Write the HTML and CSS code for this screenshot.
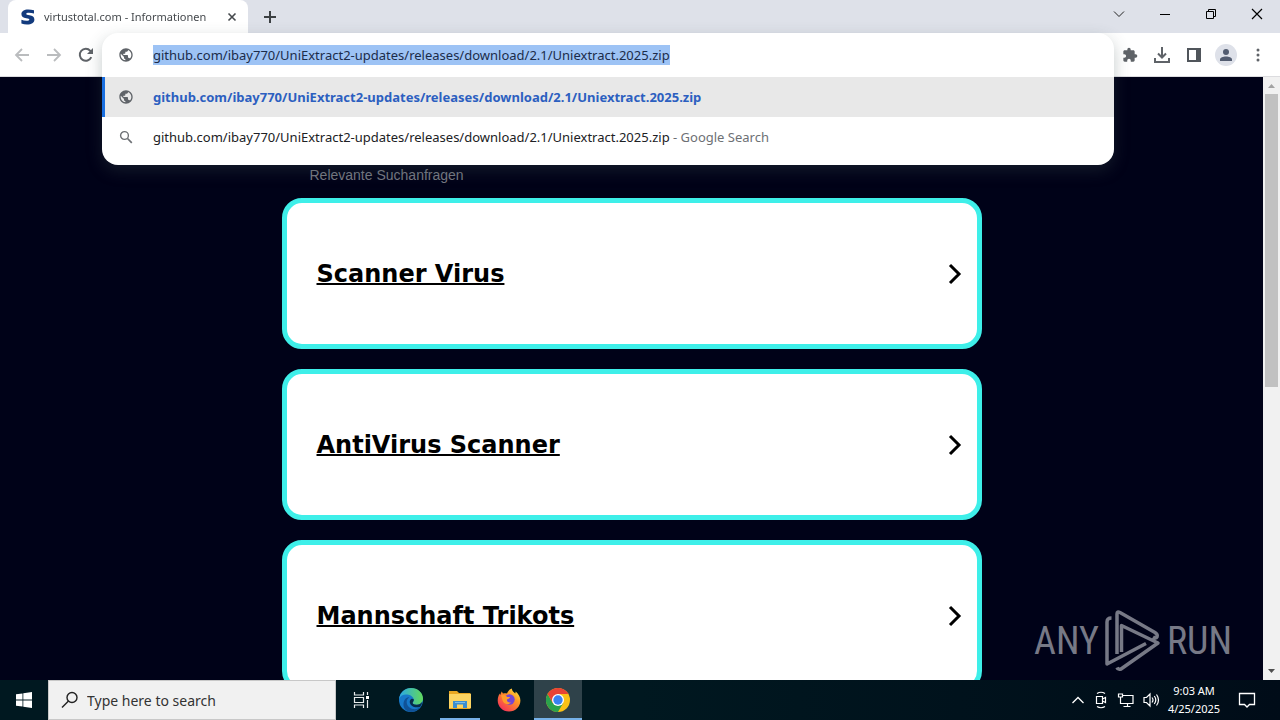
FILE: index.html
```html
<!DOCTYPE html>
<html lang="en">
<head>
    <meta charset="UTF-8">
    <meta name="viewport" content="width=device-width, initial-scale=1.0">
    <title>virtustotal.com - Informationen</title>
    <link rel="stylesheet" href="styles.css">
</head>
<body>
    <header class="tabstrip">
        <div class="tab">
            <svg class="favicon" width="16" height="16" viewBox="0 0 16 16"><path d="M14 4.600V1.200C12 .6 10 .4 8.200.4 4 .4 1.400 2.200 1.400 5c0 2.600 1.800 3.700 4.800 4.200 2.300.4 3.200.6 3.200 1.400 0 .9-1.100 1.200-2.900 1.200-1.800 0-3.500-.4-5.100-1.100v3.800c1.700.7 3.500 1 5.600 1 4.500 0 7.400-1.600 7.400-5 0-2.700-1.900-3.800-4.900-4.300C7.300 5.800 6.300 5.600 6.300 4.900c0-.8 1-1.100 2.600-1.100 1.700 0 3.500.3 5.100.8z" fill="#123a7d"/></svg>
            <span class="tab_title">virtustotal.com - Informationen</span>
            <button class="icon_button tab_close" aria-label="Close tab">
                <svg width="10" height="10" viewBox="0 0 10 10"><path d="M1.500 1.500l7 7M8.500 1.500l-7 7" stroke="#45494d" stroke-width="1.600"/></svg>
            </button>
        </div>
        <button class="icon_button new_tab" aria-label="New tab">
            <svg width="14" height="14" viewBox="0 0 14 14"><path d="M7 1v12M1 7h12" stroke="#3c4043" stroke-width="2"/></svg>
        </button>
        <div class="window_controls">
            <button class="icon_button" aria-label="Search tabs"><svg width="12" height="12" viewBox="0 0 12 12"><path d="M1 3.500l5 5 5-5" fill="none" stroke="#222"/></svg></button>
            <button class="icon_button" aria-label="Minimize"><svg width="12" height="12" viewBox="0 0 12 12"><path d="M1 6.500h10" stroke="#000"/></svg></button>
            <button class="icon_button" aria-label="Restore"><svg width="12" height="12" viewBox="0 0 12 12"><path d="M1.500 3.500h7v7h-7zM3.500 3.500v-2h7v7h-2" fill="none" stroke="#000"/></svg></button>
            <button class="icon_button" aria-label="Close"><svg width="12" height="12" viewBox="0 0 12 12"><path d="M1 1l10 10M11 1L1 11" stroke="#000" stroke-width="1.200"/></svg></button>
        </div>
    </header>

    <nav class="toolbar">
        <div class="nav_buttons">
            <button class="icon_button" aria-label="Back"><svg width="16" height="16" viewBox="0 0 16 16"><path d="M15 8H2M8 2L2 8l6 6" fill="none" stroke="#babcbe" stroke-width="1.800"/></svg></button>
            <button class="icon_button" aria-label="Forward"><svg width="16" height="16" viewBox="0 0 16 16"><path d="M1 8h13M8 2l6 6-6 6" fill="none" stroke="#babcbe" stroke-width="1.800"/></svg></button>
            <button class="icon_button" aria-label="Reload"><svg width="16" height="16" viewBox="0 0 16 16"><path d="M13.300 10.200A6 6 0 1 1 12.300 3.800L14 5.500" fill="none" stroke="#5f6368" stroke-width="2"/><path d="M15 1v6H9z" fill="#5f6368"/></svg></button>
        </div>
        <div class="omnibox">
            <div class="omnibox_popup">
                <label class="address_row" for="address">
                    <svg class="row_icon" width="16" height="16" viewBox="0 0 24 24"><path d="M12 2C6.480 2 2 6.480 2 12s4.480 10 10 10 10-4.480 10-10S17.520 2 12 2zm-1 17.930c-3.950-.49-7-3.850-7-7.930 0-.62.08-1.210.21-1.790L9 15v1c0 1.100.9 2 2 2v1.930zm6.900-2.540c-.26-.81-1-1.390-1.900-1.390h-1v-3c0-.55-.45-1-1-1H8v-2h2c.55 0 1-.45 1-1V7h2c1.100 0 2-.9 2-2v-.41c2.930 1.190 5 4.060 5 7.410 0 2.080-.8 3.970-2.100 5.390z" fill="#5f6368"/></svg>
                    <input id="address" class="address" type="text" aria-label="Address" value="github.com/ibay770/UniExtract2-updates/releases/download/2.1/Uniextract.2025.zip" spellcheck="false">
                </label>
                <a class="suggestion selected" href="#">
                    <svg class="row_icon" width="16" height="16" viewBox="0 0 24 24"><path d="M12 2C6.480 2 2 6.480 2 12s4.480 10 10 10 10-4.480 10-10S17.520 2 12 2zm-1 17.930c-3.950-.49-7-3.850-7-7.930 0-.62.08-1.210.21-1.790L9 15v1c0 1.100.9 2 2 2v1.930zm6.900-2.540c-.26-.81-1-1.390-1.900-1.390h-1v-3c0-.55-.45-1-1-1H8v-2h2c.55 0 1-.45 1-1V7h2c1.100 0 2-.9 2-2v-.41c2.930 1.190 5 4.060 5 7.410 0 2.080-.8 3.970-2.100 5.390z" fill="#5f6368"/></svg>
                    <span>github.com/ibay770/UniExtract2-updates/releases/download/2.1/Uniextract.2025.zip</span>
                </a>
                <a class="suggestion" href="#">
                    <svg class="row_icon" width="16" height="16" viewBox="0 0 16 16"><circle cx="6.500" cy="6.500" r="3.900" fill="none" stroke="#6d7074" stroke-width="1.400"/><path d="M9.500 9.500l4.300 4.300" stroke="#6d7074" stroke-width="1.700"/></svg>
                    <span>github.com/ibay770/UniExtract2-updates/releases/download/2.1/Uniextract.2025.zip<span class="hint"> - Google Search</span></span>
                </a>
            </div>
        </div>
        <div class="toolbar_actions">
            <button class="icon_button" aria-label="Extensions"><svg width="16" height="16" viewBox="0 0 24 24"><path d="M20.500 11H19V7c0-1.100-.9-2-2-2h-4V3.500a2.500 2.500 0 0 0-5 0V5H4c-1.100 0-2 .9-2 2v3.800h1.500a2.700 2.700 0 0 1 0 5.400H2V20c0 1.100.9 2 2 2h3.800v-1.500a2.700 2.700 0 0 1 5.400 0V22H17c1.100 0 2-.9 2-2v-4h1.500a2.500 2.500 0 0 0 0-5z" fill="#5f6368"/></svg></button>
            <button class="icon_button" aria-label="Downloads"><svg width="16" height="16" viewBox="0 0 16 16"><path d="M8 0v10M4 6.500l4 4 4-4M1 11v4h14v-4" fill="none" stroke="#5f6368" stroke-width="2"/></svg></button>
            <button class="icon_button" aria-label="Side panel"><svg width="14" height="14" viewBox="0 0 14 14"><path d="M1 1h12v12H1z" fill="none" stroke="#50555b" stroke-width="2"/><path d="M9 1h4v12H9z" fill="#50555b"/></svg></button>
            <button class="icon_button avatar" aria-label="Profile"><svg width="14" height="14" viewBox="0 0 14 14"><circle cx="7" cy="4" r="3" fill="#525c70"/><path d="M1 13v-1.500C1 9.500 4 8.500 7 8.500s6 1 6 3V13z" fill="#525c70"/></svg></button>
            <button class="icon_button menu" aria-label="Menu"><svg width="4" height="14" viewBox="0 0 4 14"><circle cx="2" cy="2" r="1.500" fill="#5f6368"/><circle cx="2" cy="7" r="1.500" fill="#5f6368"/><circle cx="2" cy="12" r="1.500" fill="#5f6368"/></svg></button>
        </div>
    </nav>

    <div class="viewport">
        <main class="page">
            <p class="related">Relevante Suchanfragen</p>
            <div class="cards">
                <a class="card" href="#"><span>Scanner Virus</span><svg width="14" height="22" viewBox="0 0 14 22"><path d="M2 2l9 9-9 9" fill="none" stroke="#000" stroke-width="3"/></svg></a>
                <a class="card" href="#"><span>AntiVirus Scanner</span><svg width="14" height="22" viewBox="0 0 14 22"><path d="M2 2l9 9-9 9" fill="none" stroke="#000" stroke-width="3"/></svg></a>
                <a class="card" href="#"><span>Mannschaft Trikots</span><svg width="14" height="22" viewBox="0 0 14 22"><path d="M2 2l9 9-9 9" fill="none" stroke="#000" stroke-width="3"/></svg></a>
            </div>
        </main>
        <div class="scrollbar">
            <svg width="17" height="17" viewBox="0 0 17 17"><path d="M5 11l3.500-4 3.500 4z" fill="#a3a3a3"/></svg>
            <div class="thumb"></div>
            <svg width="17" height="17" viewBox="0 0 17 17"><path d="M5 6l3.500 4L12 6z" fill="#505050"/></svg>
        </div>
        <div class="watermark">
            <span>ANY</span>
            <svg width="56" height="64" viewBox="0 0 56 64"><path d="M6.500 9q-4.500 0-4.500 4v42l39-20.500M12 45V5q0-3 3-1.500l35 20q3 2 2 4.500-1 2-4 0M16.500 43V16.500L53 34 16 60q-3 1-4-1.500" fill="none" stroke="currentColor" stroke-width="3.500" stroke-linejoin="round"/></svg>
            <span>RUN</span>
        </div>
    </div>

    <footer class="taskbar">
        <button class="start" aria-label="Start">
            <svg width="16" height="16" viewBox="0 0 16 16"><path d="M0 2.300L6.500 1.400v6.200H0zM7.300 1.300L16 0v7.600H7.300zM0 8.400h6.500v6.200L0 13.700zM7.300 8.400H16V16l-8.700-1.300z" fill="#fff"/></svg>
        </button>
        <label class="search">
            <svg width="18" height="18" viewBox="0 0 18 18"><circle cx="11" cy="6.500" r="5" fill="none" stroke="#222" stroke-width="1.400"/><path d="M7.500 10L1 16.500" stroke="#222" stroke-width="1.400"/></svg>
            <input class="search_input" type="text" placeholder="Type here to search" aria-label="Search">
        </label>
        <div class="apps">
            <button class="app task_view" aria-label="Task view">
                <svg width="18" height="18" viewBox="0 0 18 18"><path d="M2.500 1v3h9V1M2.500 17v-3h9v3M2.500 6.500h9v5h-9zM15.500 1v3M15.500 9v8" fill="none" stroke="#e8eced" stroke-width="1.200"/><path d="M14 5h3v3h-3z" fill="#fff"/></svg>
            </button>
            <button class="app" aria-label="Microsoft Edge">
                <svg width="24" height="24" viewBox="0 0 24 24">
                    <defs>
                        <linearGradient id="edgeTop" x1="0" y1="0" x2="1" y2="0"><stop offset="0" stop-color="#2aa8e6"/><stop offset="1" stop-color="#62d95b"/></linearGradient>
                    </defs>
                    <circle cx="12" cy="12" r="12" fill="#1778c9"/>
                    <path d="M0 11C1 4.500 6 0 12 0c7 0 12 5 12 10.500 0 4-3 6.300-6.500 6.300-3 0-4.200-1.300-3.800-2.300 1-1.300 1.300-2 .9-3.500C13.700 8 10.300 6.600 7 6.600 4 6.600 1.200 8 0 11z" fill="url(#edgeTop)"/>
                    <path d="M8.300 11.500C6.400 15 9 20 13.800 21c3 .6 6-.6 8-2.200C19.700 22 16 24 12.500 24 7 24 4 20 4.500 15.500 4.900 12 7 9.300 10.200 9z" fill="#105297"/>
                    <path d="M14.600 11c.4 1.500.1 2.200-.9 3.500-.4 1 .8 2.300 3.800 2.300 2.500 0 4.600-1.100 5.700-3-.3 1.900-.8 3.500-1.900 4.900-3 1.200-7.700.7-9.700-2.200-1.500-2.200-1-4.700 1-5.700z" fill="#082b49"/>
                </svg>
            </button>
            <button class="app running" aria-label="File Explorer">
                <svg width="22" height="20" viewBox="0 0 22 20"><path d="M0 1h8l2 2h11.500v16H0z" fill="#e9a722"/><path d="M0 4h22v14H0z" fill="#fcd462"/><path d="M4 18v-7h14v7h-4v-3.500H8V18z" fill="#3b8ed0"/><path d="M6 12h10v1H6z" fill="#78bced"/></svg>
            </button>
            <button class="app" aria-label="Firefox">
                <svg width="24" height="24" viewBox="0 0 24 24">
                    <defs><linearGradient id="fox" x1="1" y1="0" x2="0.200" y2="1"><stop offset="0" stop-color="#fff04a"/><stop offset="0.400" stop-color="#ff9a24"/><stop offset="1" stop-color="#f42c5b"/></linearGradient></defs>
                    <path d="M12 23.500C5.700 23.500.7 18.700.7 12.500c0-3 1-5.500 2-7L3 7.300 4.700 3.500l1.300 2C7.500 5 9 5 10 5.500 11 3 13 1 14.800.500c.2 2.500 2 3.500 3.500 5l.4-2c3 2.500 4.700 5.500 4.700 9 0 6.200-5 11-11.400 11z" fill="url(#fox)"/>
                    <circle cx="12.500" cy="11.500" r="5.200" fill="#7446d4"/>
                    <path d="M4 7.500c2-1 5-.5 6 1.500h3c-.3 1.500-2 2-3 2.500-.5 2 1.500 3.500 4 2.800-1.500 2.600-6 2.500-8-.8-1-2-1-4-2-6z" fill="#ff9c2a"/>
                </svg>
            </button>
            <button class="app running active" aria-label="Google Chrome">
                <svg width="24" height="24" viewBox="0 0 24 24"><circle cx="12" cy="12" r="12" fill="#fbc116"/><path d="M1.600 6A12 12 0 0 0 12 24l5.200-9H6.800z" fill="#2ba24c"/><path d="M22.400 6A12 12 0 0 0 1.600 6l5.200 9L12 6z" fill="#e94335"/><circle cx="12" cy="12" r="6" fill="#fff"/><circle cx="12" cy="12" r="4.700" fill="#3982f1"/></svg>
            </button>
        </div>
        <div class="tray">
            <svg width="14" height="18" viewBox="0 0 14 18"><path d="M1.500 12L7 6.500l5.500 5.500" fill="none" stroke="#fff" stroke-width="1.300"/></svg>
            <svg width="14" height="18" viewBox="0 0 14 18"><path d="M2.500 5.500h6v7h-6zM8.500 8l3-1.500v5l-3-1.500M3 2.500q4-2.500 8 0M3 15.500q4 2.500 8 0" fill="none" stroke="#fff" stroke-width="1.200"/></svg>
            <svg width="17" height="18" viewBox="0 0 17 18"><path d="M5 4.500h11v8H5M10.500 13v3M6.500 15.500h7M1.500 3v3h4V3zM3.500 6v6.500H5" fill="none" stroke="#fff" stroke-width="1.200"/></svg>
            <svg width="17" height="18" viewBox="0 0 17 18"><path d="M1 6.500h2.500L7 3v12l-3.500-3.500H1zM9 6.500q2 2.500 0 5M11.300 5q3 4 0 8M13.500 3.500q4 5.500 0 11" fill="none" stroke="#fff" stroke-width="1.200"/></svg>
        </div>
        <div class="clock"><span>9:03 AM</span><span>4/25/2025</span></div>
        <button class="notifications" aria-label="Notifications">
            <svg width="18" height="18" viewBox="0 0 18 18"><path d="M1.500 2.500h15v11h-5L9 16l-2.500-2.500h-5z" fill="none" stroke="#fff" stroke-width="1.300"/></svg>
        </button>
    </footer>
</body>
</html>
```

FILE: styles.css
```css
* {
    box-sizing: border-box;
}
body {
    display: flex;
    flex-direction: column;
    height: 100vh;
    margin: 0;
    overflow: hidden;
    font-family: "Noto Sans", "Open Sans", sans-serif;
    font-size: 13px;
    color: #202124;
}
svg {
    display: block;
    flex: none;
}
button {
    padding: 0;
    border: 0;
    background: none;
    cursor: pointer;
}
a {
    color: inherit;
    text-decoration: none;
}
.icon_button {
    display: flex;
    align-items: center;
    justify-content: center;
    width: 32px;
    height: 28px;
}

/* tabs */
.tabstrip {
    display: flex;
    align-items: stretch;
    height: 33px;
    padding-left: 8px;
    background: #dee1e9;
}
.tab {
    display: flex;
    align-items: center;
    width: 240px;
    padding: 0 8px 0 12px;
    border-radius: 8px 8px 0 0;
    background: #fff;
}
.tab_title {
    flex: 1;
    margin-left: 8px;
    white-space: nowrap;
    font-size: 11px;
    color: #45494d;
    mask-image: linear-gradient(to right, #000 90%, transparent);
}
.tab_close {
    width: 16px;
}
.new_tab {
    height: 33px;
    margin-left: 6px;
}
.window_controls {
    display: flex;
    margin-left: auto;
}
.window_controls .icon_button {
    width: 46px;
}

/* toolbar */
.toolbar {
    display: flex;
    align-items: center;
    height: 44px;
    background: #fff;
    border-bottom: 1px solid #dcdcdf;
}
.nav_buttons {
    display: flex;
    padding: 0 0 0 6px;
}
.omnibox {
    position: relative;
    flex: 1;
    align-self: stretch;
}
.omnibox_popup {
    position: absolute;
    z-index: 2;
    top: 0;
    left: 0;
    right: 0;
    padding-bottom: 8px;
    overflow: hidden;
    border-radius: 16px;
    background: #fff;
    box-shadow: 0 6px 16px rgba(60, 80, 80, 0.3);
}
.address_row,
.suggestion {
    display: flex;
    align-items: center;
    gap: 19px;
    height: 40px;
    padding-left: 16px;
    white-space: nowrap;
}
.address_row {
    height: 44px;
}
.address {
    field-sizing: content;
    height: 20px;
    padding: 0;
    border: 0;
    outline: 0;
    background: #9dc3f5;
    font: inherit;
    color: #1b2c4a;
}
.selected {
    background: #e8e8e8;
    box-shadow: inset 3px 0 #1a6fe0;
    font-weight: bold;
    color: #2c5fc0;
}
.hint {
    color: #6d7074;
}
.toolbar_actions {
    display: flex;
    align-items: center;
    padding-right: 6px;
}
.avatar {
    width: 22px;
    height: 22px;
    margin: 0 5px;
    border-radius: 50%;
    background: #dee1e9;
}

/* page */
.viewport {
    position: relative;
    display: flex;
    flex: 1;
    min-height: 0;
    overflow: hidden;
    background: #000218;
}
.page {
    flex: 1;
    padding: 88px 20px 0;
}
.related {
    max-width: 700px;
    margin: 0 auto;
    padding-left: 28px;
    font-family: "Liberation Sans", Arial, sans-serif;
    font-size: 14px;
    line-height: 20px;
    color: #777983;
}
.cards {
    display: flex;
    flex-direction: column;
    gap: 20px;
    max-width: 700px;
    margin: 13px auto 0;
}
.card {
    display: flex;
    align-items: center;
    justify-content: space-between;
    height: 151px;
    padding: 0 15px 0 30px;
    border: 5px solid #3eefe9;
    border-radius: 20px;
    background: #fff;
    font-family: "DejaVu Sans", Verdana, sans-serif;
    font-size: 24px;
    font-weight: bold;
    color: #000;
}
.card span {
    text-decoration: underline;
    text-decoration-thickness: 2px;
}
.scrollbar {
    display: flex;
    flex-direction: column;
    width: 17px;
    background: #f1f1f1;
}
.thumb {
    height: 293px;
    margin: 0 2px auto;
    background: #c1c1c1;
}
.watermark {
    position: absolute;
    right: 48px;
    bottom: 7px;
    display: flex;
    align-items: center;
    gap: 6px;
    font-family: "Liberation Sans Narrow", "Roboto Condensed", Roboto, sans-serif;
    font-size: 38px;
    color: #777986;
}

/* taskbar */
.taskbar {
    display: flex;
    height: 40px;
    background: linear-gradient(to right, #001820, #001820 50%, #000c18);
    color: #fff;
}
.start {
    display: flex;
    align-items: center;
    justify-content: center;
    width: 48px;
}
.search {
    display: flex;
    align-items: center;
    gap: 8px;
    width: 288px;
    padding-left: 12px;
    border: 1px solid #c8c8c8;
    background: #f1f1f1;
}
.search_input {
    flex: 1;
    min-width: 0;
    padding: 0;
    border: 0;
    outline: 0;
    background: none;
    font: inherit;
    font-size: 14px;
}
.search_input::placeholder {
    color: #333;
}
.apps {
    display: flex;
    gap: 1px;
}
.app {
    display: flex;
    align-items: center;
    justify-content: center;
    width: 48px;
}
.task_view {
    width: 50px;
}
.running {
    background: linear-gradient(#76b1e8, #76b1e8) center bottom / 40px 2px no-repeat;
}
.active {
    background-color: #2f424a;
    background-size: 48px 2px;
}
.tray {
    display: flex;
    align-items: center;
    gap: 9px;
    margin-left: auto;
}
.clock {
    display: flex;
    flex-direction: column;
    align-items: center;
    justify-content: center;
    width: 68px;
    font-size: 11px;
    line-height: 18px;
}
.notifications {
    display: flex;
    align-items: center;
    justify-content: center;
    width: 38px;
    margin-right: 14px;
}
```
